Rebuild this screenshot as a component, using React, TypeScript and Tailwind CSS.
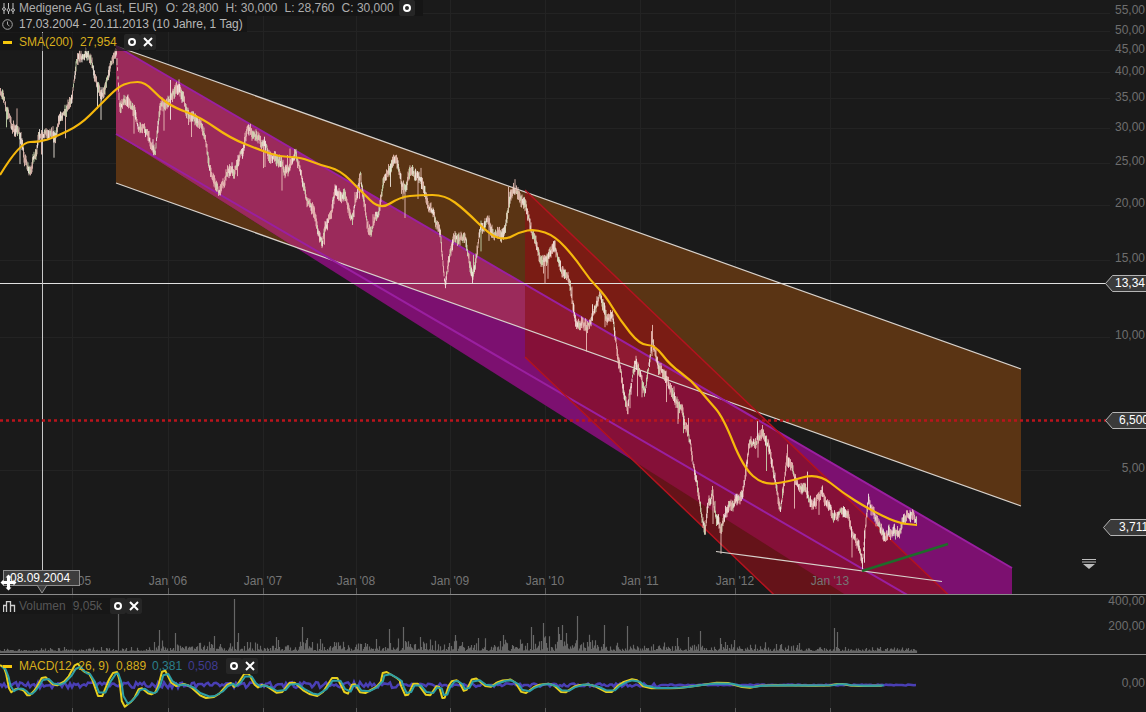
const ticks = [72, 168, 263, 356, 450, 545, 640, 735, 830];
const dateLabels = ["Jan '05", "Jan '06", "Jan '07", "Jan '08", "Jan '09", "Jan '10", "Jan '11", "Jan '12", "Jan '13"];
const priceLabels: [string, number][] = [
  ["55,00", 10], ["50,00", 30], ["45,00", 49], ["40,00", 71], ["35,00", 97], ["30,00", 127],
  ["25,00", 161], ["20,00", 203], ["15,00", 258], ["10,00", 335], ["5,00", 468],
];
const gridY = [13, 31, 50, 72, 98, 128, 163, 205, 260, 337, 470];

// channels
const brown = "116,46 1021,369 1021,506 116,183";
const purple = "116,46 1012,568 1012,700 116,134";
const red = "525,190 1060,702 885,702 525,357";

type P = [number, number];

const priceKeys: P[] = [
  [0, 90], [8, 122], [15, 135], [22, 145], [30, 180], [38, 135], [48, 128], [55, 135], [62, 115], [70, 95], [76, 70],
  [85, 52], [92, 60], [100, 90], [108, 75], [116, 52], [119, 95], [125, 105], [135, 115], [145, 135], [155, 148],
  [160, 105], [168, 95], [178, 92], [190, 110], [200, 120], [210, 165], [218, 185], [230, 175], [242, 155], [247, 118],
  [252, 135], [262, 145], [275, 150], [283, 175], [295, 160], [305, 195], [315, 215], [322, 245], [335, 185], [345, 190],
  [352, 225], [360, 185], [368, 235], [378, 215], [383, 175], [395, 155], [405, 185], [412, 170], [420, 175], [430, 210],
  [440, 240], [445, 290], [455, 230], [465, 235], [472, 280], [480, 225], [495, 235], [505, 220], [513, 195], [525, 200],
  [530, 225], [540, 265], [555, 255], [565, 275], [575, 320], [585, 320], [600, 305], [612, 320], [620, 365], [627, 410],
  [635, 370], [645, 385], [652, 335], [658, 370], [668, 385], [680, 410], [690, 440], [695, 480], [705, 525], [712, 490],
  [720, 525], [730, 510], [742, 495], [748, 450], [762, 428], [770, 450], [780, 505], [786, 465], [795, 480], [810, 495],
  [830, 510], [848, 520], [855, 540], [862, 565], [868, 500], [875, 520], [885, 540], [895, 535], [902, 512], [910, 515], [916, 525],
];

const smaKeys: P[] = [
  [0, 175], [20, 142], [40, 142], [55, 137], [80, 125], [100, 105], [118, 87], [130, 82], [145, 82], [160, 98], [175, 108],
  [200, 117], [230, 138], [260, 150], [280, 157], [300, 157], [320, 165], [340, 170], [360, 190], [380, 210], [400, 197],
  [420, 195], [445, 195], [465, 210], [490, 235], [505, 240], [520, 232], [535, 229], [555, 236], [575, 258], [590, 280],
  [605, 295], [620, 320], [640, 345], [655, 345], [670, 365], [691, 380], [708, 400], [723, 417], [743, 467], [763, 485],
  [787, 482], [818, 473], [843, 493], [867, 508], [897, 523], [917, 525],
];

const macdLeft: P[] = [
  [0, 375], [15, 385], [30, 460], [50, 445], [70, 450], [85, 470], [105, 450], [130, 405], [165, 440], [200, 420], [230, 365],
  [250, 395], [270, 400], [300, 485], [335, 400], [355, 395], [368, 505], [400, 480], [420, 440], [450, 465], [470, 455],
  [490, 380], [520, 440], [560, 430], [610, 475], [650, 470], [690, 425], [705, 445], [740, 390], [770, 445], [790, 432],
  [840, 465], [875, 420], [920, 460], [960, 470], [1005, 400], [1040, 470], [1060, 425], [1085, 465], [1140, 435], [1150, 390], [1200, 420],
];
const macdRight: P[] = [
  [0, 280], [20, 325], [45, 270], [85, 325], [115, 280], [130, 335], [150, 275], [175, 270], [195, 310], [220, 258], [265, 295],
  [300, 272], [340, 268], [370, 315], [410, 285], [455, 280], [490, 312], [530, 285], [575, 283], [630, 312], [660, 280],
  [705, 265], [735, 295], [830, 295], [870, 290], [970, 275], [1040, 295], [1090, 285], [1280, 288], [1320, 280], [1360, 288], [1445, 287],
];
const macdKeys: P[] = [
  ...macdLeft.map(([x, y]): P => [x / 3, 540 + y / 3]),
  ...macdRight.map(([x, y]): P => [400 + x / 3, 590 + y / 3]),
];

const volumeSpikes: P[] = [
  [118, 42], [159, 23], [175, 20], [214, 17], [234, 54], [238, 20], [276, 16], [302, 26], [320, 14], [389, 24], [403, 26], [420, 16],
  [455, 18], [478, 15], [503, 18], [531, 26], [543, 30], [558, 26], [562, 28], [566, 20], [577, 37], [604, 28], [627, 27],
  [677, 15], [688, 16], [700, 22], [720, 15], [734, 13], [834, 25], [837, 21],
];

function makeRand(seed: number) {
  let s = seed;
  return () => {
    s = (s * 1664525 + 1013904223) % 4294967296;
    return s / 4294967296;
  };
}

function interp(keys: P[], x: number) {
  for (let i = 1; i < keys.length; i++) {
    if (x <= keys[i][0]) {
      const [x0, y0] = keys[i - 1];
      const [x1, y1] = keys[i];
      return y0 + ((y1 - y0) * (x - x0)) / (x1 - x0 || 1);
    }
  }
  return keys[keys.length - 1][1];
}

function smooth(keys: P[]) {
  let d = `M${keys[0][0]} ${keys[0][1]}`;
  for (let i = 1; i < keys.length - 1; i++) {
    const mx = (keys[i][0] + keys[i + 1][0]) / 2;
    const my = (keys[i][1] + keys[i + 1][1]) / 2;
    d += `Q${keys[i][0]} ${keys[i][1]} ${mx} ${my}`;
  }
  const last = keys[keys.length - 1];
  return d + `L${last[0]} ${last[1]}`;
}

function cutCorners(keys: P[], cut: number) {
  const out: P[] = [keys[0]];
  for (let i = 0; i < keys.length - 1; i++) {
    const [x0, y0] = keys[i];
    const [x1, y1] = keys[i + 1];
    out.push([x0 + (x1 - x0) * cut, y0 + (y1 - y0) * cut]);
    out.push([x1 - (x1 - x0) * cut, y1 - (y1 - y0) * cut]);
  }
  out.push(keys[keys.length - 1]);
  return out;
}

function priceBars() {
  const rand = makeRand(17);
  const groups = ["", "", ""];
  let walk = 0;
  let jitter = 0;
  let jitterNext = 0;
  for (let i = 0; i <= 1832; i++) {
    const x = i / 2;
    if (i % 12 === 0) {
      jitter = jitterNext;
      jitterNext = (rand() - 0.5) * 18;
    }
    walk = walk * 0.8 + (rand() - 0.5) * 5;
    const mix = jitter + ((jitterNext - jitter) * (i % 12)) / 12;
    const y = interp(priceKeys, x) + walk + mix;
    const h = 1.5 + rand() * 4.5;
    const spikeDown = rand() > 0.975 ? 8 + rand() * 18 : 0;
    const spikeUp = rand() > 0.985 ? 6 + rand() * 10 : 0;
    const r = rand();
    const g = r < 0.66 ? 0 : r < 0.84 ? 1 : 2;
    groups[g] += `M${x + 0.5} ${(y - h - spikeUp).toFixed(1)}V${(y + h + spikeDown).toFixed(1)}`;
  }
  return groups;
}

function volumeBars() {
  const rand = makeRand(91);
  let d = "";
  for (let x = 0; x <= 916; x++) {
    const amp = x < 40 ? 3 : x < 150 ? 5 : x < 250 ? 11 : x < 530 ? 14 : x < 600 ? 24 : x < 800 ? 10 : 5;
    const h = 2 + rand() * rand() * amp;
    d += `M${x + 0.5} 653V${(653 - h).toFixed(1)}`;
  }
  volumeSpikes.forEach(([x, h]) => {
    d += `M${x + 0.5} 653V${653 - h}`;
  });
  return d;
}

function macdSignal() {
  const rand = makeRand(5);
  const pts: string[] = [];
  for (let x = 0; x <= 916; x += 2) {
    const amp = x < 400 ? 6 : x < 660 ? 3.5 : 1;
    pts.push(`${x},${(685 + (rand() - 0.5) * amp).toFixed(1)}`);
  }
  return pts.join(" ");
}

const macdYellow = cutCorners(macdKeys, 0.2);
const macdTeal = cutCorners(
  macdKeys.map(([x, y]): P => [x + 2, y + (685 - y) * 0.1]),
  0.3,
);
const toPoints = (keys: P[]) => keys.map(([x, y]) => `${x.toFixed(1)},${y.toFixed(1)}`).join(" ");
const bars = priceBars();

function RingButton() {
  return (
    <span className="flex h-[16px] w-[16px] items-center justify-center rounded-[2px] bg-[#262626]">
      <span className="h-[8px] w-[8px] rounded-full border-2 border-white" />
    </span>
  );
}

function CloseButton() {
  return (
    <span className="flex h-[16px] w-[16px] items-center justify-center rounded-[2px] bg-[#262626]">
      <svg width="10" height="10" viewBox="0 0 10 10" stroke="#fff" strokeWidth="2">
        <path d="M1 1l8 8M9 1l-8 8" />
      </svg>
    </span>
  );
}

function PriceTag({ label, top, left, textLeft }: { label: string; top: number; left: number; textLeft: number }) {
  const w = 1146 - left + 2;
  return (
    <div className="absolute h-[17px] overflow-hidden" style={{ top, left, width: 1146 - left }}>
      <svg width={w} height="17" className="absolute left-0 top-0">
        <polygon points={`0.5,8.5 7.5,0.5 ${w},0.5 ${w},16.5 7.5,16.5`} fill="#3a3a3a" stroke="#b5b5b5" />
      </svg>
      <span className="absolute top-0 whitespace-nowrap text-[12px] leading-[17px] text-white" style={{ left: textLeft - left }}>
        {label}
      </span>
    </div>
  );
}

function AxisLabel({ text, top }: { text: string; top: number }) {
  return (
    <span className="absolute right-[1px] text-[12px] leading-[14px] text-[#6e6e6e]" style={{ top: top - 7 }}>
      {text}
    </span>
  );
}

function Grid({ y0, h, tickTop }: { y0: number; h: number; tickTop?: number }) {
  return (
    <>
      {ticks.map((x) => (
        <line key={x} x1={x + 0.5} x2={x + 0.5} y1={y0} y2={y0 + h} stroke="#232323" />
      ))}
      {tickTop !== undefined &&
        ticks.map((x) => <line key={x} x1={x + 0.5} x2={x + 0.5} y1={tickTop} y2={y0 + h} stroke="#5a5a5a" />)}
    </>
  );
}

function MainChart() {
  return (
    <svg className="absolute inset-0" width="1146" height="594" viewBox="0 0 1146 594">
      <defs>
        <clipPath id="clip-brown"><polygon points={brown} /></clipPath>
        <clipPath id="clip-purple"><polygon points={purple} /></clipPath>
      </defs>
      <Grid y0={0} h={594} tickTop={588} />
      {gridY.map((y) => (
        <line key={y} x1={0} x2={1110} y1={y + 0.5} y2={y + 0.5} stroke="#232323" />
      ))}

      {/* channel fills, overlaps are painted on their own */}
      <polygon points={brown} fill="#5a3414" />
      <polygon points={purple} fill="#7c1070" />
      <polygon points={red} fill="#651319" />
      <g clipPath="url(#clip-brown)">
        <polygon points={purple} fill="#9b2a5b" />
        <polygon points={red} fill="#7a1c14" />
      </g>
      <g clipPath="url(#clip-purple)">
        <polygon points={red} fill="#851038" />
        <g clipPath="url(#clip-brown)">
          <polygon points={red} fill="#8f1a32" />
        </g>
      </g>

      <line x1="116" y1="46" x2="1021" y2="369" stroke="#d8d2cc" strokeWidth="1.2" />
      <line x1="116" y1="183" x2="1021" y2="506" stroke="#d8d2cc" strokeWidth="1.2" />
      <line x1="116" y1="46" x2="1012" y2="568" stroke="#9a1fa0" strokeWidth="2" />
      <line x1="116" y1="134" x2="940" y2="614" stroke="#9a1fa0" strokeWidth="2" />
      <line x1="525" y1="190" x2="960" y2="606" stroke="#b3131f" strokeWidth="1.5" />
      <line x1="525" y1="357" x2="790" y2="610" stroke="#b3131f" strokeWidth="1.5" />

      <line x1="0" y1="283.5" x2="1106" y2="283.5" stroke="#e0e0e0" />
      <line x1="42.5" y1="0" x2="42.5" y2="570" stroke="#c8c8c8" />
      <line x1="0" y1="420.5" x2="1106" y2="420.5" stroke="#b9141c" strokeWidth="2.5" strokeDasharray="3 3" />

      <path d={bars[0]} stroke="#f0c6bd" strokeWidth="1" opacity="0.85" />
      <path d={bars[1]} stroke="#ccdfb4" strokeWidth="1" opacity="0.85" />
      <path d={bars[2]} stroke="#f7efe6" strokeWidth="1" opacity="0.85" />
      <path d={smooth(smaKeys)} fill="none" stroke="#f6b80c" strokeWidth="2.2" />

      <line x1="716" y1="551.5" x2="942" y2="581.5" stroke="#d8d2cc" strokeWidth="1.2" />
      <line x1="862" y1="571" x2="948" y2="544" stroke="#1f6b2a" strokeWidth="2.5" />

      {/* scroll marker */}
      <path d="M1082 559.5h14M1082 562h14" stroke="#bdbdbd" />
      <polygon points="1083,564 1095,564 1089,569" fill="#bdbdbd" />
    </svg>
  );
}

function VolumeChart() {
  return (
    <svg className="absolute inset-0" width="1146" height="59" viewBox="0 595 1146 59">
      <Grid y0={595} h={59} />
      <path d={volumeBars()} stroke="#666" strokeWidth="1.2" />
    </svg>
  );
}

function MacdChart() {
  return (
    <svg className="absolute inset-0" width="1146" height="57" viewBox="0 655 1146 57">
      <Grid y0={655} h={57} tickTop={708} />
      <polyline points={macdSignal()} fill="none" stroke="#4a3fb5" strokeWidth="2.5" />
      <polyline points={toPoints(macdYellow)} fill="none" stroke="#e8d01e" strokeWidth="2" strokeLinejoin="round" />
      <polyline points={toPoints(macdTeal)} fill="none" stroke="#2e9fa6" strokeWidth="2" strokeLinejoin="round" />
    </svg>
  );
}

function MainLegend() {
  return (
    <div className="absolute left-0 top-0 flex flex-col items-start text-[12px] leading-[16px]">
      <div className="flex h-[16px] items-center gap-[7px] bg-[#151515] pl-[2px] pr-[8px] text-[#adadad]">
        <svg width="13" height="13" viewBox="0 0 13 13" fill="none" stroke="#c4c4c4" className="mr-[-3px]">
          <path d="M2 1v11M6.5 1v11M11 1v11" />
          <circle cx="2" cy="7" r="1.4" fill="#151515" />
          <circle cx="6.5" cy="8" r="1.4" fill="#151515" />
          <circle cx="11" cy="8" r="1.4" fill="#151515" />
        </svg>
        <span className="mr-[1px] whitespace-nowrap">Medigene AG (Last, EUR)</span>
        <span className="whitespace-nowrap">O: 28,800</span>
        <span className="whitespace-nowrap">H: 30,000</span>
        <span className="whitespace-nowrap">L: 28,760</span>
        <span className="mr-[-2px] whitespace-nowrap">C: 30,000</span>
        <RingButton />
      </div>
      <div className="flex h-[16px] items-center gap-[6px] bg-[#151515] pl-[2px] pr-[4px] text-[#b8b8b8]">
        <svg width="11" height="11" viewBox="0 0 11 11" fill="none" stroke="#a8a8a8">
          <circle cx="5.5" cy="5.5" r="4.8" />
          <path d="M5.5 2.5v3l2 1.5" />
        </svg>
        <span className="whitespace-nowrap">17.03.2004 - 20.11.2013 (10 Jahre, 1 Tag)</span>
      </div>
      <div className="mt-[1px] flex h-[18px] items-center gap-[7px] bg-[#151515]/70 pl-[3px] text-[#d8ae1c]">
        <span className="h-[3px] w-[9px] bg-[#f6c80c]" />
        <span className="whitespace-nowrap">SMA(200)</span>
        <span className="whitespace-nowrap">27,954</span>
        <span className="flex items-center">
          <RingButton />
          <CloseButton />
        </span>
      </div>
    </div>
  );
}

function VolumeLegend() {
  return (
    <div className="absolute left-0 top-[3px] flex h-[16px] items-center gap-[7px] bg-[#151515]/60 pl-[3px] text-[12px] text-[#565656]">
      <svg width="13" height="11" viewBox="0 0 13 11" fill="none" stroke="#d0d0d0" strokeWidth="1.3" className="mr-[-4px]">
        <path d="M0.5 11V4.5h3V11M3.5 11V0.5h4V11M7.5 11V4.5h4V11" />
      </svg>
      <span className="whitespace-nowrap">Volumen</span>
      <span className="whitespace-nowrap">9,05k</span>
      <span className="ml-[1px] flex items-center">
        <RingButton />
        <CloseButton />
      </span>
    </div>
  );
}

function MacdLegend() {
  return (
    <div className="absolute left-0 top-[3px] flex h-[16px] items-center gap-[7px] pl-[3px] text-[12px] text-[#d8ae1c]">
      <span className="h-[3px] w-[9px] bg-[#f6c80c]" />
      <span className="whitespace-nowrap">MACD(12, 26, 9)</span>
      <span className="whitespace-nowrap">0,889</span>
      <span className="ml-[-1px] whitespace-nowrap text-[#2b7f8c]">0,381</span>
      <span className="ml-[-1px] whitespace-nowrap text-[#403b92]">0,508</span>
      <span className="ml-[1px] flex items-center">
        <RingButton />
        <CloseButton />
      </span>
    </div>
  );
}

export default function App() {
  return (
    <div className="flex h-[712px] w-[1146px] flex-col overflow-hidden bg-[#1a1a1a] font-['Liberation_Sans',Arial,sans-serif]">
      <div className="relative h-[594px] overflow-hidden">
        <MainChart />
        {priceLabels.map(([text, y]) => (
          <AxisLabel key={text} text={text} top={y} />
        ))}
        {ticks.map((x, i) => (
          <span
            key={x}
            className="absolute top-[574px] w-[60px] whitespace-nowrap text-center text-[12px] leading-[14px] text-[#757575]"
            style={{ left: x - 30 }}
          >
            {dateLabels[i]}
          </span>
        ))}
        <PriceTag label="13,34" top={275} left={1105} textLeft={1115} />
        <PriceTag label="6,500" top={412} left={1105} textLeft={1119} />
        <PriceTag label="3,711" top={519} left={1103} textLeft={1119} />
        <MainLegend />

        {/* crosshair date */}
        <div className="absolute left-[3px] top-[570px] h-[16px] w-[77px] border border-[#8f8f8f] bg-[#3d3d3d] pl-[6px] text-[12px] leading-[14px] text-white">
          08.09.2004
        </div>
        <svg className="absolute left-[37px] top-[585px]" width="10" height="9" viewBox="0 0 10 9">
          <polygon points="0,0 10,0 5,8" fill="#3d3d3d" stroke="#8f8f8f" />
        </svg>
        {/* move cursor */}
        <svg className="absolute left-[0px] top-[574px]" width="17" height="17" viewBox="0 0 17 17" fill="#fff">
          <path d="M8.500 0.500l3 3h-1.500v3.500h3.500v-1.500l3 3-3 3v-1.500h-3.500v3.500h1.500l-3 3-3-3h1.500v-3.500h-3.500v1.500l-3-3 3-3v1.500h3.500v-3.500h-1.500z" />
        </svg>
      </div>
      <div className="h-px shrink-0 bg-[#8c8c8c]" />
      <div className="relative h-[59px] overflow-hidden">
        <VolumeChart />
        <span className="absolute right-[1px] top-[-1px] text-[12px] leading-[14px] text-[#6e6e6e]">400,00</span>
        <span className="absolute right-[1px] top-[24px] text-[12px] leading-[14px] text-[#6e6e6e]">200,00</span>
        <VolumeLegend />
      </div>
      <div className="h-px shrink-0 bg-[#8c8c8c]" />
      <div className="relative flex-1 overflow-hidden">
        <MacdChart />
        <span className="absolute right-[1px] top-[21px] text-[12px] leading-[14px] text-[#6e6e6e]">0,00</span>
        <MacdLegend />
      </div>
    </div>
  );
}
